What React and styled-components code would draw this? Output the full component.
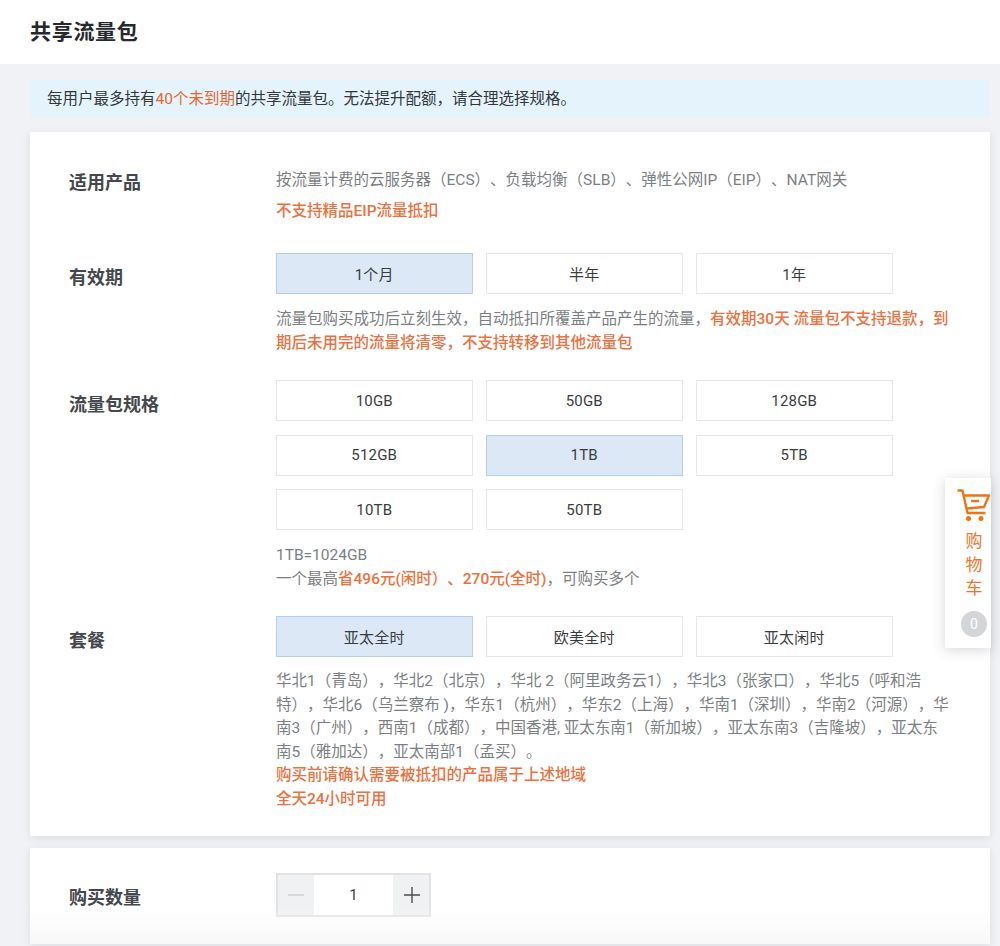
import React from 'react';
import styled, { createGlobalStyle } from 'styled-components';

const GlobalStyle = createGlobalStyle`
html, body {
    margin : 0;
    padding : 0;
    background : #f1f2f5;
    font-family : Roboto, "Noto Sans CJK SC", sans-serif;
    text-spacing-trim : space-all;
}
`;

const Page = styled.div`
position : relative;
width : 1000px;
height : 946px;
overflow : hidden;
`;

const Header = styled.div`
height : 64px;
background : #fff;
display : flex;
align-items : center;
padding : 0 30px 4px;
box-sizing : border-box;
font-size : 21px;
font-weight : 700;
letter-spacing : 0.7px;
color : #26292c;
`;

const Main = styled.div`
padding : 15px 10px 0 30px;
display : flex;
flex-direction : column;
`;

const Notice = styled.div`
height : 39px;
background : #e5f4fc;
display : flex;
align-items : center;
padding : 0 16px 3px;
font-size : 15.5px;
color : #33373b;
border : 1px solid #edf2f6;
box-sizing : border-box;
`;

const Orange = styled.span`
color : #e8662f;
`;

const Strong = styled.span`
color : #ea7140;
font-weight : 500;
`;

const Card = styled.div`
margin-top : ${props => props.$top}px;
background : #fff;
box-shadow : 0 2px 8px rgba(60, 70, 80, 0.12);
padding : ${props => props.$pad};
height : ${props => props.$height}px;
box-sizing : border-box;
`;

const Row = styled.div`
display : flex;
margin-bottom : ${props => props.$gap || 0}px;
`;

const Label = styled.div`
width : 207px;
flex-shrink : 0;
font-size : 18px;
font-weight : 700;
color : #44484c;
line-height : 24px;
padding-top : ${props => props.$top || 0}px;
`;

const Content = styled.div`
width : 675px;
`;

const Text = styled.div`
font-size : 15.5px;
line-height : 23.5px;
color : #7b7f83;
margin-top : ${props => props.$top || 0}px;
`;

const Options = styled.div`
display : grid;
grid-template-columns : repeat(3, 196.5px);
column-gap : 13.5px;
row-gap : 13.5px;
`;

const Option = styled.div`
height : 41px;
display : flex;
align-items : center;
justify-content : center;
box-sizing : border-box;
font-size : 15px;
letter-spacing : 0.2px;
color : #3a3d40;
border : 1px solid ${props => props.$active ? "#b4cfe8" : "#e5e7e9"};
background : ${props => props.$active ? "#dce8f6" : "#fff"};
`;

const Stepper = styled.div`
width : 155px;
height : 44px;
display : flex;
border : 2px solid #e0e2e4;
box-sizing : border-box;
`;

const StepBtn = styled.div`
width : 36px;
box-sizing : border-box;
background : #f0f1f2;
display : flex;
align-items : center;
justify-content : center;
padding-left : ${props => props.$off ? 0 : 2}px;
color : ${props => props.$off ? "#c9cccf" : "#4a4d50"};
`;

const StepValue = styled.div`
flex : 1;
display : flex;
align-items : center;
justify-content : center;
font-size : 15px;
color : #3a3d40;
`;

const Fade = styled.div`
position : absolute;
left : 30px;
right : 10px;
top : 905px;
height : 39px;
background : linear-gradient(to bottom, rgba(248, 248, 249, 0), rgba(248, 248, 249, 1));
`;

const Cart = styled.div`
position : absolute;
left : 945px;
top : 478px;
width : 46px;
height : 170px;
background : #fff;
box-shadow : 0 2px 12px rgba(60, 70, 80, 0.22);
display : flex;
flex-direction : column;
align-items : center;
padding : 11px 0 0 12px;
box-sizing : border-box;
`;

const CartText = styled.div`
margin-top : 7px;
width : 18px;
font-size : 17px;
line-height : 23.5px;
text-align : center;
color : #e8782c;
`;

const Badge = styled.div`
margin-top : 10px;
width : 26px;
height : 26px;
flex-shrink : 0;
border-radius : 50%;
background : #d3d5d8;
color : #fff;
font-size : 14px;
display : flex;
align-items : center;
justify-content : center;
`;

const CartIcon = () => (
    <svg width="34" height="34" viewBox="0 0 34 34" fill="none" stroke="#ee7414" strokeWidth="2.4" style={{ flexShrink: 0 }}>
        <path d="M0.5 1.5h5l5 22.5h18" strokeLinejoin="round" />
        <path d="M7 6.5h25l-5 11.5-17 1.5" strokeLinejoin="round" />
        <path d="M14 12h8" />
        <circle cx="11.5" cy="29.5" r="2.5" fill="#ee7414" stroke="none" />
        <circle cx="24" cy="29.5" r="2.5" fill="#ee7414" stroke="none" />
    </svg>
);

const Minus = () => (
    <svg width="16" height="16" viewBox="0 0 16 16" stroke="currentColor" strokeWidth="1.4">
        <path d="M0 8h16" />
    </svg>
);

const Plus = () => (
    <svg width="16" height="16" viewBox="0 0 16 16" stroke="currentColor" strokeWidth="1.4">
        <path d="M0 8h16M8 0v16" />
    </svg>
);

const App = () => {
    return <>
        <GlobalStyle />
        <Page>
            <Header>共享流量包</Header>
            <Main>
                <Notice>
                    <span>每用户最多持有<Orange>40个未到期</Orange>的共享流量包。无法提升配额，请合理选择规格。</span>
                </Notice>
                <Card $top={14} $pad="36px 0 0 39px" $height={704}>
                    <Row $gap={30}>
                        <Label $top={3}>适用产品</Label>
                        <Content>
                            <Text $top={1}>按流量计费的云服务器（ECS）、负载均衡（SLB）、弹性公网IP（EIP）、NAT网关</Text>
                            <Text $top={7}><Strong>不支持精品EIP流量抵扣</Strong></Text>
                        </Content>
                    </Row>
                    <Row $gap={25}>
                        <Label $top={13}>有效期</Label>
                        <Content>
                            <Options>
                                <Option $active>1个月</Option>
                                <Option>半年</Option>
                                <Option>1年</Option>
                            </Options>
                            <Text $top={14}>流量包购买成功后立刻生效，自动抵扣所覆盖产品产生的流量，<Strong>有效期30天 流量包不支持退款，到期后未用完的流量将清零，不支持转移到其他流量包</Strong></Text>
                        </Content>
                    </Row>
                    <Row $gap={25}>
                        <Label $top={13}>流量包规格</Label>
                        <Content>
                            <Options>
                                <Option>10GB</Option>
                                <Option>50GB</Option>
                                <Option>128GB</Option>
                                <Option>512GB</Option>
                                <Option $active>1TB</Option>
                                <Option>5TB</Option>
                                <Option>10TB</Option>
                                <Option>50TB</Option>
                            </Options>
                            <Text $top={14}>1TB=1024GB<br />一个最高<Strong>省496元(闲时）、270元(全时)</Strong>，可购买多个</Text>
                        </Content>
                    </Row>
                    <Row>
                        <Label $top={13}>套餐</Label>
                        <Content>
                            <Options>
                                <Option $active>亚太全时</Option>
                                <Option>欧美全时</Option>
                                <Option>亚太闲时</Option>
                            </Options>
                            <Text $top={13}>华北1（青岛），华北2（北京），华北 2（阿里政务云1），华北3（张家口），华北5（呼和浩特），华北6（乌兰察布 )，华东1（杭州），华东2（上海），华南1（深圳），华南2（河源），华南3（广州），西南1（成都），中国香港, 亚太东南1（新加坡），亚太东南3（吉隆坡），亚太东南5（雅加达），亚太南部1（孟买）。<br /><Strong>购买前请确认需要被抵扣的产品属于上述地域</Strong><br /><Strong>全天24小时可用</Strong></Text>
                        </Content>
                    </Row>
                </Card>
                <Card $top={12} $pad="25px 0 0 39px" $height={96}>
                    <Row>
                        <Label $top={13}>购买数量</Label>
                        <Stepper>
                            <StepBtn $off><Minus /></StepBtn>
                            <StepValue>1</StepValue>
                            <StepBtn><Plus /></StepBtn>
                        </Stepper>
                    </Row>
                </Card>
            </Main>
            <Fade />
            <Cart>
                <CartIcon />
                <CartText>购物车</CartText>
                <Badge>0</Badge>
            </Cart>
        </Page>
    </>
}

export default App;
